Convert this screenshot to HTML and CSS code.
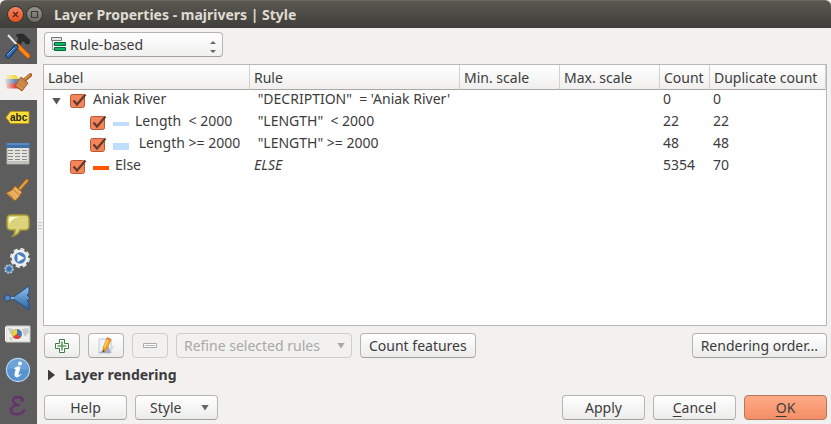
FILE: index.html
```html
<!DOCTYPE html>
<html lang="en">
<head>
<meta charset="utf-8">
<title>Layer Properties - majrivers | Style</title>
<link rel="stylesheet" href="styles.css">
</head>
<body>
<header class="titlebar">
  <button class="win-btn win-close" aria-label="Close"><svg width="15" height="15" viewBox="0 0 15 15"><path d="M5 5l5 5M10 5l-5 5" stroke="#5a2413" stroke-width="1.3"/></svg></button>
  <button class="win-btn" aria-label="Maximize"><svg width="15" height="15" viewBox="0 0 15 15"><path d="M4.500 4.500h6v6h-6z" fill="none" stroke="#3b3a36" stroke-width="1.2"/></svg></button>
  <h1>Layer Properties - majrivers | Style</h1>
</header>
<div class="body">
  <nav class="tabs" aria-label="Sections">
    <button class="tab" aria-label="General"><svg width="26" height="26" viewBox="0 0 26 26"><path d="M3 2l10 11" stroke="#d8d8d8" stroke-width="2"/><path d="M3 2l10 11" stroke="#fff" stroke-width=".7"/><path d="M11 2c5-2 9-1 11 3l3 2-1 4-3 0-2-3-2 0-2 4-3-3 2-3c-1-2-2-3-3-4z" fill="#2b2d2c" stroke="#171918" stroke-width=".5"/><path d="M13 13l10 10" stroke="#b44c08" stroke-width="5" stroke-linecap="round"/><path d="M13 13l10 10" stroke="#ff8519" stroke-width="3.4" stroke-linecap="round"/><path d="M11 14l-8 9" stroke="#16345f" stroke-width="5" stroke-linecap="round"/><path d="M11 14l-8 9" stroke="#3470b7" stroke-width="3" stroke-linecap="round"/><path d="M9 15l-7 7" stroke="#87aedb"/></svg></button>
    <button class="tab tab-active" aria-label="Style"><svg width="28" height="26" viewBox="0 0 28 26"><defs><linearGradient id="fade"><stop offset="0" stop-color="#fff" stop-opacity="0"/><stop offset=".4" stop-color="#fff"/></linearGradient><mask id="swipe"><path d="M0 0h28v26H0z" fill="url(#fade)"/></mask></defs><g mask="url(#swipe)"><path d="M2 6h10l4 5H2z" fill="#f6d743"/><path d="M1 10h14l2 5H1z" fill="#6a87b0"/><path d="M2 14.500h11l3 5H3z" fill="#e5463f"/></g><path d="M26.500 6l-6 5" stroke="#a95e24" stroke-width="3.600" stroke-linecap="round"/><path d="M26 6l-6 5" stroke="#dc9450" stroke-width="1.600" stroke-linecap="round"/><path d="M17 8l7 6-6 8-7-5z" fill="#c98344" stroke="#a15c28"/><path d="M15 12l6 5M13 15l6 5" stroke="#dd9d60"/></svg></button>
    <button class="tab" aria-label="Labels"><svg width="26" height="18" viewBox="0 0 26 18"><path d="M1 8.500l4.500-6H23a1 1 0 0 1 1 1v10a1 1 0 0 1-1 1H5.500z" fill="#f9de38" stroke="#b7931b"/><text class="abc" x="5" y="12">abc</text></svg></button>
    <button class="tab" aria-label="Fields"><svg width="24" height="22" viewBox="0 0 24 22"><path d="M1 1h22v20H1z" fill="#e3e4df" stroke="#a5a69f"/><path d="M0 0h24v5H0z" fill="#3f70ad"/><path d="M1 1h22" stroke="#7aa3d4"/><path d="M2 7.500h20M2 10.500h20M2 13.500h20M2 16.500h20" stroke="#888983" stroke-dasharray="5 2"/><path d="M1 18h22v3H1z" fill="#bfc0ba"/></svg></button>
    <button class="tab" aria-label="Rendering"><svg width="24" height="24" viewBox="0 0 24 24"><path d="M21 2.500l-7 8" stroke="#9e5b15" stroke-width="4" stroke-linecap="round"/><path d="M21 2.500l-7 8" stroke="#e7a24b" stroke-width="2" stroke-linecap="round"/><path d="M9 8l7 6-3 5-4 4-9-8 6-3z" fill="#e6a552" stroke="#a76320"/><path d="M6 13l6 6M4 14l5 6M9 10l6 5" stroke="#f5c47c"/><path d="M3 15l4 5M8 12l5 5" stroke="#c98a3e"/></svg></button>
    <button class="tab" aria-label="Display"><svg width="26" height="24" viewBox="0 0 26 24"><path d="M6 1h14c3 0 4 2 4 4v7c0 3-2 4-4 4h-5c-1 3-3 5-7 6 2-2 2-4 2-6H6c-3 0-4-2-4-4V5c0-2 1-4 4-4z" fill="#ddd37b" stroke="#a69a35" stroke-width="1.5"/><path d="M4 10V6c0-2 1-3 3-3h7c-5 1-8 3-10 7z" fill="#fffce0"/></svg></button>
    <button class="tab" aria-label="Actions"><svg width="28" height="28" viewBox="0 0 28 28"><circle cx="16" cy="10" r="8.500" fill="none" stroke="#e4e4e2" stroke-width="3" stroke-dasharray="4 2.680"/><circle cx="16" cy="10" r="7" fill="#477fbd" stroke="#efefed" stroke-width="2.500"/><path d="M13.500 6l7 4-7 4z" fill="#fff"/><circle cx="5" cy="21" r="4" fill="#5c8fc6" stroke="#b8cbdc" stroke-width="1.500" stroke-dasharray="2 1"/><circle cx="5" cy="21" r="2" fill="#3a71ab"/></svg></button>
    <button class="tab" aria-label="Joins"><svg width="28" height="26" viewBox="0 0 28 26"><defs><linearGradient id="blue" x2="0" y2="1"><stop offset="0" stop-color="#96c2ec"/><stop offset="1" stop-color="#2562a7"/></linearGradient></defs><path d="M8 13L25 1v7l-2 2 3 3-3 3 2 2v7z" fill="url(#blue)" stroke="#204f85"/><path d="M5 13h5" stroke="#80ade0" stroke-width="2"/><circle cx="3.500" cy="13" r="3" fill="#5289c4" stroke="#234d7e"/></svg></button>
    <button class="tab" aria-label="Diagrams"><svg width="26" height="18" viewBox="0 0 26 18"><path d="M1 1h24v16H1z" fill="#eeeeeb" stroke="#c9c9c4"/><path d="M3 3l5 1 1 4-3 2-2-4zM17 4l6-1 1 4-4 5-2-4zM4 12l4 1-2 3z" fill="#c7c9c6"/><path d="M0 2v14" stroke="#fff" stroke-width="2"/><circle cx="12" cy="9" r="5" fill="#417eb9"/><path d="M12 9V4a5 5 0 0 0-4 8z" fill="#f5d52c"/><path d="M12 9l-4 3a5 5 0 0 0 8 0z" fill="#df423c"/></svg></button>
    <button class="tab" aria-label="Metadata"><svg width="26" height="26" viewBox="0 0 26 26"><circle cx="13" cy="13" r="11.500" fill="#5693d0" stroke="#b7d1ec" stroke-width="1.300"/><path d="M3 12a10 10 0 0 1 20 0c-5 2-14-2-20 0z" fill="#7caee0" opacity=".6"/><circle cx="15" cy="6.500" r="2" fill="#fff"/><path d="M9.500 11.500c2-1.500 4-2 5-1.500s-1 5-1.500 7.500c0 1.500 1 1.500 3-.5-1 2.500-6 4.500-6 1s2.500-6.500-.5-6.500z" fill="#fff" stroke="#fff"/></svg></button>
    <button class="tab" aria-label="Variables"><svg width="20" height="24" viewBox="0 0 20 24"><path d="M15 6c-1-4-10-4-10 0 0 3 3 5 7 5C7 11 3 13 3 16.500c0 5 11 5 13 0" fill="none" stroke="#65346f" stroke-width="2.600" stroke-linecap="round"/><circle cx="14.500" cy="6" r="2" fill="#65346f"/></svg></button>
  </nav>
  <div class="splitter"></div>
  <main class="panel">
    <div class="renderer">
      <svg class="renderer-icon" width="15" height="15" viewBox="0 0 15 15"><path d="M1.500 4v8.500H4M1.500 7.500H4" fill="none" stroke="#999"/><path d="M.5.500h10v3H.5z" fill="#e8e8e8" stroke="#777"/><path d="M3.500 5.500h11v3h-11zM3.500 10.500h11v3h-11z" fill="#12b765" stroke="#08653a"/></svg>
      <select class="renderer-select" aria-label="Renderer"><option>Rule-based</option></select>
      <svg class="renderer-arrows" width="6" height="12" viewBox="0 0 6 12"><path d="M0 3l3-3 3 3zM0 9l3 3 3-3z" fill="#666"/></svg>
    </div>
    <div class="rules">
      <table>
        <colgroup><col class="c-label"><col class="c-rule"><col class="c-scale"><col class="c-scale"><col class="c-count"><col></colgroup>
        <thead><tr><th>Label</th><th>Rule</th><th>Min. scale</th><th>Max. scale</th><th>Count</th><th>Duplicate count</th></tr></thead>
        <tbody>
          <tr><td><div class="node"><button class="expander" aria-label="Collapse"></button><input type="checkbox" id="r1" checked><label for="r1">Aniak River</label></div></td><td> "DECRIPTION"  = 'Aniak River'</td><td></td><td></td><td>0</td><td>0</td></tr>
          <tr><td><div class="node child"><input type="checkbox" id="r2" checked><span class="swatch"></span><label for="r2">Length  &lt; 2000</label></div></td><td> "LENGTH"  &lt; 2000</td><td></td><td></td><td>22</td><td>22</td></tr>
          <tr><td><div class="node child"><input type="checkbox" id="r3" checked><span class="swatch thick"></span><label for="r3"> Length &gt;= 2000</label></div></td><td> "LENGTH" &gt;= 2000</td><td></td><td></td><td>48</td><td>48</td></tr>
          <tr><td><div class="node leaf"><input type="checkbox" id="r4" checked><span class="swatch orange"></span><label for="r4">Else</label></div></td><td><em>ELSE</em></td><td></td><td></td><td>5354</td><td>70</td></tr>
        </tbody>
      </table>
    </div>
    <div class="row">
      <button class="btn icon-btn" aria-label="Add rule"><svg width="16" height="16" viewBox="0 0 16 16"><path d="M5.500 1.500h5v4h4v5h-4v4h-5v-4h-4v-5h4z" fill="#fff" stroke="#3f7d42"/><path d="M8 3.500v9M3.500 8h9" stroke="#5d9e60" stroke-width="1.600"/></svg></button>
      <button class="btn icon-btn" aria-label="Edit rule"><svg width="18" height="18" viewBox="0 0 18 18"><path d="M2 2h12v14H2z" fill="#f0f2f9" stroke="#c2c8d6"/><path d="M2 16l9-8 3 8z" fill="#a4adbf"/><path d="M14 8l3 2-3 4z" fill="#d4dce9"/><path d="M10 1l4 2-5 10-3 2V11z" fill="#f5a71b" stroke="#dc801d" stroke-width=".7"/><path d="M11 2.500L7.500 10" stroke="#ffdb63" stroke-width="1.500"/><path d="M10 1l4 2" stroke="#e8703c" stroke-width="1.500"/><path d="M6 13v2l2-1z" fill="#333"/></svg></button>
      <button class="btn icon-btn" disabled aria-label="Remove rule"><svg width="16" height="16" viewBox="0 0 16 16"><path d="M1.500 5.500h13v4h-13z" fill="#fff" stroke="#aaa"/><path d="M3 7.500h10" stroke="#b8b8b8" stroke-width="1"/></svg></button>
      <button class="btn menu-btn refine" disabled>Refine selected rules<i class="arrow"></i></button>
      <button class="btn">Count features</button>
      <button class="btn push">Rendering order...</button>
    </div>
    <button class="group"><i class="closed"></i>Layer rendering</button>
    <footer class="row">
      <button class="btn dlg">Help</button>
      <button class="btn menu-btn dlg">Style<i class="arrow"></i></button>
      <button class="btn dlg push">Apply</button>
      <button class="btn dlg"><span><u>C</u>ancel</span></button>
      <button class="btn dlg primary"><span><u>O</u>K</span></button>
    </footer>
  </main>
</div>
</body>
</html>
```
FILE: styles.css
```css
* { box-sizing: border-box; }
body {
  margin: 0;
  min-height: 100vh;
  display: flex;
  flex-direction: column;
  background: #f2f1f0;
  color: #3c3c3c;
  font: 14px/20px "Noto Sans", sans-serif;
}
button, select, input { font: inherit; color: inherit; margin: 0; }
svg { display: block; flex: none; }

.titlebar {
  height: 28px;
  padding: 0 8px;
  display: flex;
  align-items: center;
  gap: 4px;
  background: linear-gradient(#5b5851, #3f3e3a);
  border-top: 1px solid #6a675f;
  border-radius: 6px 6px 0 0;
}
.titlebar h1 { margin: 0 0 0 8px; font-size: 14px; line-height: 20px; font-weight: 700; color: #dfdbd2; }
.win-btn {
  width: 15px;
  height: 15px;
  padding: 0;
  display: flex;
  align-items: center;
  justify-content: center;
  border: 0;
  border-radius: 50%;
  background: linear-gradient(#95938b, #6c6a63);
  box-shadow: 0 0 0 1px #35342f;
}
.win-close { background: linear-gradient(#f98462, #e2501f); }

.body { flex: 1; display: flex; }
.tabs { width: 37px; display: flex; flex-direction: column; background: #5d5d5d; }
.tab {
  flex: 1;
  min-height: 36px;
  padding: 0 2px 0 0;
  display: flex;
  align-items: center;
  justify-content: center;
  border: 0;
  background: none;
}
.tab-active { background: #f2f1f0; }
.abc { font: bold 10px "Liberation Sans", sans-serif; fill: #222; }
.splitter {
  width: 6px;
  background: repeating-linear-gradient(#c9c7c4 0 1px, #f2f1f0 1px 3px) center / 4px 9px no-repeat;
}
.panel { flex: 1; min-width: 0; padding: 4px 4px 4px 0; display: flex; flex-direction: column; }

.renderer { width: 179px; margin-left: 1px; position: relative; }
.renderer-select {
  width: 100%;
  height: 25px;
  padding: 0 24px 0 25px;
  appearance: none;
  border: 1px solid #b8b5b1;
  border-bottom-color: #a19f9b;
  border-radius: 4px;
  background: linear-gradient(#fff, #f0f0ef);
}
.renderer-icon { position: absolute; left: 7px; top: 5px; }
.renderer-arrows { position: absolute; right: 7px; top: 9px; }

.rules { flex: 1; margin: 7px 0; border: 1px solid #b9b7b4; background: #fff; }
table { width: 100%; border-collapse: separate; border-spacing: 0; table-layout: fixed; }
.c-label { width: 206px; }
.c-rule { width: 210px; }
.c-scale { width: 100px; }
.c-count { width: 50px; }
th {
  height: 25px;
  padding: 1px 4px 0;
  text-align: left;
  font-weight: 400;
  white-space: nowrap;
  border-right: 1px solid #d3d1ce;
  border-bottom: 1px solid #a9a7a2;
  background: linear-gradient(#fff, #f0efee);
}
td { height: 22px; padding: 0 4px 4px; line-height: 18px; white-space: pre; }
td:nth-child(n+5) { padding-left: 3px; }
td:first-child { padding: 0; }
.node { height: 22px; padding-left: 8px; display: flex; align-items: center; }
.node.child { padding-left: 46px; }
.node.leaf { padding-left: 26px; }
.node label { padding-bottom: 4px; margin-left: 6px; }
.expander { width: 9px; height: 7px; margin-right: 9px; padding: 0; border: 0; background: #555; clip-path: polygon(0 0, 100% 0, 50% 100%); }
.node input {
  width: 17px;
  height: 16px;
  appearance: none;
  background: url("data:image/svg+xml,%3Csvg xmlns='http://www.w3.org/2000/svg' viewBox='0 0 17 16'%3E%3Crect x='.5' y='1.500' width='14' height='13' rx='2' fill='%23f48459' stroke='%23ba5632'/%3E%3Cpath d='M3.500 7.500l3.500 4 8.500-10' fill='none' stroke='%23633a2b' stroke-width='2.200'/%3E%3C/svg%3E");
}
.swatch { width: 16px; height: 4px; margin: 2px 0 0 6px; background: #bfdeff; }
.swatch.thick { height: 7px; }
.swatch.orange { background: #ff5500; }

.row { display: flex; gap: 8px; padding-left: 1px; }
.push { margin-left: auto; }
.btn {
  height: 25px;
  padding: 0 8px;
  display: flex;
  align-items: center;
  justify-content: center;
  white-space: nowrap;
  border: 1px solid #b8b5b1;
  border-bottom-color: #a19f9b;
  border-radius: 4px;
  background: linear-gradient(#fff, #ececeb);
}
.btn:disabled { color: #aaa8a6; border-color: #cfccc9; background: #f2f1f0; }
.icon-btn { width: 36px; padding: 0; }
.dlg { width: 83px; }
.menu-btn { justify-content: space-between; }
.menu-btn.dlg { padding-left: 14px; }
.refine { width: 176px; padding: 0 6px 0 7px; }
.arrow { width: 8px; height: 6px; background: #666; clip-path: polygon(0 0, 100% 0, 50% 100%); }
.btn:disabled .arrow { background: #aaa8a6; }
.primary { border-color: #b4765d; background: linear-gradient(#ffaa87, #f38e66); }
u { text-underline-offset: 3px; }
.group {
  margin: 7px 0 10px;
  padding: 0 5px;
  align-self: flex-start;
  display: flex;
  align-items: center;
  gap: 10px;
  border: 0;
  background: none;
  font-weight: 700;
}
.closed { width: 7px; height: 11px; background: #3c3c3c; clip-path: polygon(0 0, 100% 50%, 0 100%); }
```
